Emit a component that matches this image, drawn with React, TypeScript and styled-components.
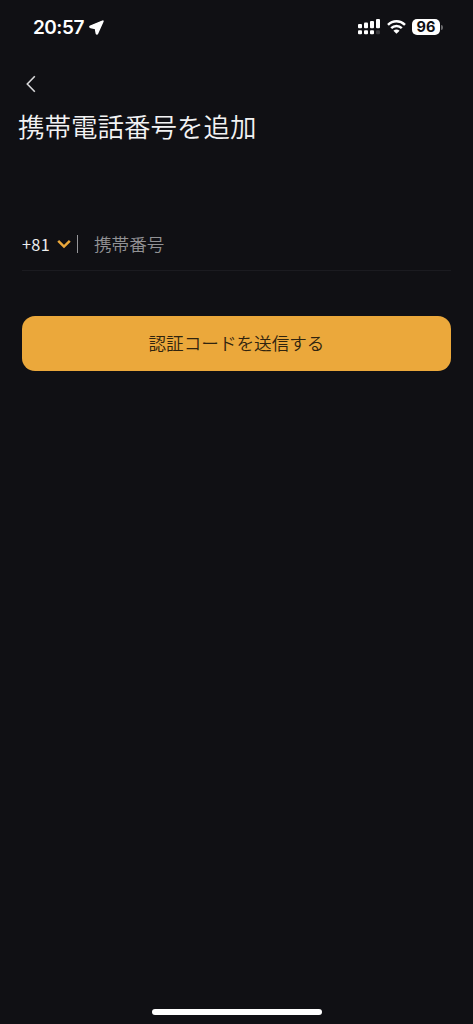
import React from 'react';
import styled, { createGlobalStyle } from 'styled-components';

const GlobalStyle = createGlobalStyle`
  * { box-sizing: border-box; }
  body { margin: 0; background: #101014; }
`;

const japaneseFont = '"Noto Sans CJK JP DemiLight", "Noto Sans CJK JP", sans-serif';

const Screen = styled.div`
  display: flex;
  flex-direction: column;
  width: 473px;
  height: 1024px;
  background: #101014;
  color: #f2f2f3;
  font-family: Inter, "Noto Sans CJK JP", sans-serif;
  overflow: hidden;
`;

const StatusBar = styled.header`
  display: flex;
  justify-content: space-between;
  align-items: center;
  height: 54px;
  padding: 0 30px 0 33px;
  flex: none;
`;

const StatusGroup = styled.div<{ $gap: number }>`
  display: flex;
  align-items: center;
  gap: ${({ $gap }) => $gap}px;
`;

const Time = styled.span`
  padding-top: 1px;
  font-size: 19px;
  line-height: 22px;
  font-weight: 600;
  letter-spacing: -0.5px;
  color: #fff;
`;

const Battery = styled.span`
  display: flex;
  align-items: center;
  gap: 1px;
`;

const BatteryLevel = styled.span`
  width: 28px;
  height: 16px;
  border-radius: 5px;
  background: #fff;
  color: #101014;
  font-size: 14.5px;
  line-height: 16px;
  font-weight: 700;
  text-align: center;
`;

const BatteryTip = styled.span`
  width: 2px;
  height: 5px;
  border-radius: 0 2px 2px 0;
  background: #68686b;
`;

const Navigation = styled.nav`
  display: flex;
  padding: 21px 0 0 25px;
`;

const BackButton = styled.button`
  display: flex;
  padding: 0;
  border: 0;
  background: none;
  color: #d8d8da;
`;

const Title = styled.h1`
  margin: 13px 0 0 18px;
  font-family: ${japaneseFont};
  font-size: 26.5px;
  line-height: 40px;
  font-weight: 350;
  color: #f2f2f3;
`;

const Form = styled.form`
  display: flex;
  flex-direction: column;
  margin: 71px 22px 0;
`;

const PhoneRow = styled.div`
  display: flex;
  align-items: center;
  height: 54px;
  border-bottom: 1px solid #1b1b20;
`;

const CountryCode = styled.span`
  width: 35px;
  font-family: "Noto Sans CJK JP", sans-serif;
  font-size: 16.3px;
  line-height: 24px;
  letter-spacing: 0.3px;
  color: #ededee;
`;

const Divider = styled.span`
  width: 1px;
  height: 18px;
  margin: 0 16px 0 6px;
  background: #96969a;
`;

const Placeholder = styled.span`
  font-family: ${japaneseFont};
  font-weight: 350;
  font-size: 17.6px;
  line-height: 26px;
  color: #929295;
`;

const SubmitButton = styled.button`
  height: 55px;
  margin-top: 45px;
  padding: 0 0 1px;
  border: 0;
  border-radius: 13px;
  background: #eba83b;
  color: #30240f;
  font-family: ${japaneseFont};
  font-weight: 350;
  font-size: 17.6px;
  line-height: 26px;
`;

const HomeIndicator = styled.div`
  width: 170px;
  height: 6px;
  margin: auto auto 9px 152px;
  border-radius: 3px;
  background: #fff;
`;

const LocationIcon = () => (
  <svg width="15" height="15" viewBox="0 0 15 15" fill="#fff" stroke="#fff" strokeWidth="1.5" strokeLinejoin="round">
    <path d="M13.5 1.1 1.4 6.1c-.8.4-.6 1.3.2 1.4l4.8.9.9 5c.1.7.9.8 1.2.1L13.9 1.5c.2-.4 0-.6-.4-.4Z" />
  </svg>
);

const SignalIcon = () => (
  <svg width="23" height="16" viewBox="0 0 23 16" fill="#fff">
    <rect x="0" y="5" width="4" height="4.3" rx="1" />
    <rect x="6" y="3.5" width="4" height="5.8" rx="1" />
    <rect x="12" y="2" width="4" height="7.3" rx="1" />
    <rect x="18" y="0" width="4" height="9.3" rx="1" />
    <rect x="0" y="11.3" width="4" height="4" rx="1" />
    <rect x="6" y="11.3" width="4" height="4" rx="1" />
    <rect x="12" y="11.3" width="4" height="4" rx="1" />
    <rect x="18" y="11.3" width="4" height="4" rx="1" fill="#38383c" />
  </svg>
);

const WifiIcon = () => (
  <svg width="19" height="14" viewBox="0 0 19 14" fill="none" stroke="#fff" strokeWidth="2.5">
    <path d="M1 4.8C5.8.1 13.2.1 18 4.8M4.2 8.2c3-2.9 7.6-2.9 10.6 0" />
    <path d="M9.5 13.8 6.4 10.7c1.8-1.6 4.4-1.6 6.2 0Z" fill="#fff" stroke="none" />
  </svg>
);

const BackIcon = () => (
  <svg width="12" height="18" viewBox="0 0 12 18" fill="none" stroke="currentColor" strokeWidth="1.6">
    <path d="M9.8 1.3 2.3 9l7.5 7.7" />
  </svg>
);

const ChevronIcon = () => (
  <svg width="14" height="10" viewBox="0 0 14 10" fill="none" stroke="#eba83b" strokeWidth="2.5">
    <path d="m1.2 1.8 5.8 5.8 5.8-5.8" />
  </svg>
);

export default function App() {
  return (
    <Screen>
      <GlobalStyle />
      <StatusBar>
        <StatusGroup $gap={5}>
          <Time>20:57</Time>
          <LocationIcon />
        </StatusGroup>
        <StatusGroup $gap={6}>
          <SignalIcon />
          <WifiIcon />
          <Battery>
            <BatteryLevel>96</BatteryLevel>
            <BatteryTip />
          </Battery>
        </StatusGroup>
      </StatusBar>
      <Navigation>
        <BackButton type="button" aria-label="戻る"><BackIcon /></BackButton>
      </Navigation>
      <Title>携帯電話番号を追加</Title>
      <Form>
        <PhoneRow>
          <CountryCode>+81</CountryCode>
          <ChevronIcon />
          <Divider />
          <Placeholder>携帯番号</Placeholder>
        </PhoneRow>
        <SubmitButton type="button">認証コードを送信する</SubmitButton>
      </Form>
      <HomeIndicator />
    </Screen>
  );
}
